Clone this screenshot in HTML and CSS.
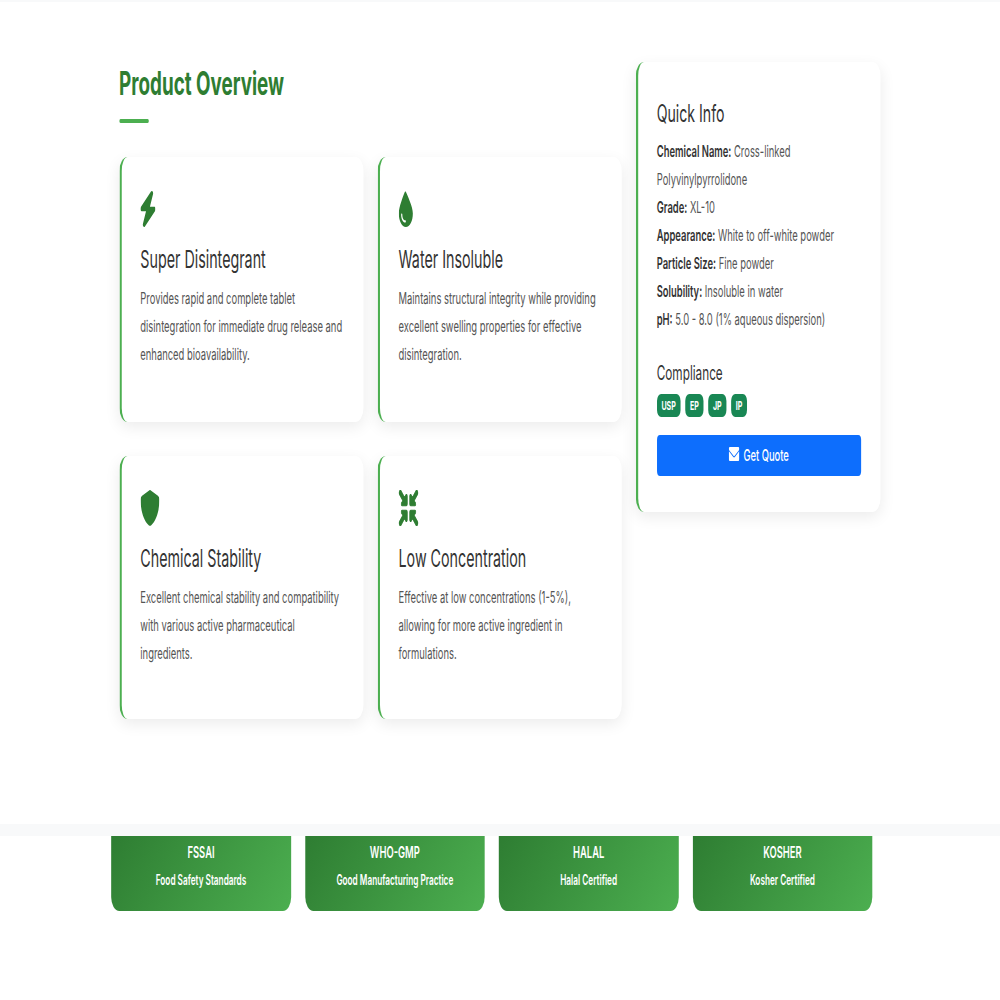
FILE: index.html
```html
<!DOCTYPE html>
<html lang="en">
<head>
<meta charset="utf-8">
<title>Product Overview</title>
<link rel="stylesheet" href="styles.css">
</head>
<body>
<div class="viewport">
<div class="page">
  <div class="top-strip"></div>
  <section class="overview">
    <div class="layout">
      <div class="main">
        <h2 class="title">Product Overview</h2>
        <div class="title-bar"></div>
        <div class="features">
          <article class="card feature">
            <svg class="icon bolt" viewBox="40 0 366 512" preserveAspectRatio="none"><path d="M349.4 44.6c5.9-13.7 1.5-29.7-10.6-38.5s-28.6-8-39.9 1.8l-256 224c-10 8.8-13.6 22.9-8.9 35.3S50.7 288 64 288H175.5L98.6 467.4c-5.9 13.7-1.5 29.7 10.6 38.5s28.6 8 39.9-1.8l256-224c10-8.8 13.6-22.9 8.9-35.3s-18.2-20.6-31.5-20.6H272.5L349.4 44.6z"/></svg>
            <h3>Super Disintegrant</h3>
            <p>Provides rapid and complete tablet disintegration for immediate drug release and enhanced bioavailability.</p>
          </article>
          <article class="card feature">
            <svg class="icon drop" viewBox="0 0 384 512" preserveAspectRatio="none"><path d="M192 512C86 512 0 426 0 320C0 228.8 130.2 57.7 166.6 11.7c6.4-8 18.5-8 24.9 0C227.8 57.7 384 228.8 384 320c0 106-86 192-192 192zM96 336c0-8.8-7.2-16-16-16s-16 7.2-16 16c0 61.9 50.1 112 112 112c8.8 0 16-7.2 16-16s-7.2-16-16-16c-44.2 0-80-35.8-80-80z"/></svg>
            <h3>Water Insoluble</h3>
            <p>Maintains structural integrity while providing excellent swelling properties for effective disintegration.</p>
          </article>
          <article class="card feature">
            <svg class="icon shield" viewBox="16 0 480 512" preserveAspectRatio="none"><path d="M256 0c4.6 0 9.2 1 13.4 2.9L457.7 82.8c22 9.3 38.4 31 38.3 57.2c-.5 99.2-41.3 280.7-213.6 363.2c-16.7 8-36.1 8-52.8 0C57.3 420.7 16.5 239.2 16 140c-.1-26.2 16.3-47.9 38.3-57.2L242.7 2.9C246.8 1 251.4 0 256 0z"/></svg>
            <h3>Chemical Stability</h3>
            <p>Excellent chemical stability and compatibility with various active pharmaceutical ingredients.</p>
          </article>
          <article class="card feature">
            <svg class="icon compress" viewBox="0 0 512 512" preserveAspectRatio="none"><path d="M200 288H88c-21.4 0-32.1 25.8-17 41l32.9 31-99.2 99.3c-6.2 6.2-6.2 16.4 0 22.6l25.4 25.4c6.2 6.2 16.4 6.2 22.6 0L152 408l31.1 33c15.1 15.1 40.9 4.4 40.9-17V312c0-13.3-10.7-24-24-24zm112-64h112c21.4 0 32.1-25.9 17-41l-33-31 99.3-99.3c6.2-6.2 6.2-16.4 0-22.6L481.9 4.7c-6.2-6.2-16.4-6.2-22.6 0L360 104l-31.1-33C313.8 55.9 288 66.6 288 88v112c0 13.3 10.7 24 24 24zm96 136l33-31.1c15.1-15.1 4.4-40.9-17-40.9H312c-13.3 0-24 10.7-24 24v112c0 21.4 25.9 32.1 41 17l31-32.9 99.3 99.3c6.2 6.2 16.4 6.2 22.6 0l25.4-25.4c6.2-6.2 6.2-16.4 0-22.6L408 360zM183 71.1L152 104 52.7 4.7c-6.2-6.2-16.4-6.2-22.6 0L4.7 30.1c-6.2 6.2-6.2 16.4 0 22.6L104 152l-33 31.1C55.9 198.2 66.6 224 88 224h112c13.3 0 24-10.7 24-24V88c0-21.3-25.9-32-41-16.9z"/></svg>
            <h3>Low Concentration</h3>
            <p>Effective at low concentrations (1-5%), allowing for more active ingredient in formulations.</p>
          </article>
        </div>
      </div>
      <aside class="card sidebar">
        <h4>Quick Info</h4>
        <ul class="facts">
          <li><strong>Chemical Name:</strong> Cross-linked Polyvinylpyrrolidone</li>
          <li><strong>Grade:</strong> XL-10</li>
          <li><strong>Appearance:</strong> White to off-white powder</li>
          <li><strong>Particle Size:</strong> Fine powder</li>
          <li><strong>Solubility:</strong> Insoluble in water</li>
          <li><strong>pH:</strong> 5.0 - 8.0 (1% aqueous dispersion)</li>
        </ul>
        <h4 class="compliance">Compliance</h4>
        <div class="badges">
          <span class="badge">USP</span><span class="badge">EP</span><span class="badge">JP</span><span class="badge">IP</span>
        </div>
        <a class="quote" href="#">
          <svg class="env" viewBox="0 64 512 384" preserveAspectRatio="none"><path d="M48 64C21.5 64 0 85.5 0 112c0 15.1 7.1 29.3 19.2 38.4L236.8 313.6c11.4 8.5 27 8.5 38.4 0L492.8 150.4c12.1-9.1 19.2-23.3 19.2-38.4c0-26.5-21.5-48-48-48H48zM0 176V384c0 35.3 28.7 64 64 64H448c35.3 0 64-28.7 64-64V176L294.4 339.2c-22.8 17.1-54 17.1-76.8 0L0 176z"/></svg>
          Get Quote
        </a>
      </aside>
    </div>
  </section>
  <div class="band"></div>
  <div class="certs">
    <div class="cert"><h5>FSSAI</h5><p>Food Safety Standards</p></div>
    <div class="cert"><h5>WHO-GMP</h5><p>Good Manufacturing Practice</p></div>
    <div class="cert"><h5>HALAL</h5><p>Halal Certified</p></div>
    <div class="cert"><h5>KOSHER</h5><p>Kosher Certified</p></div>
  </div>
</div>
</div>
</body>
</html>
```
FILE: styles.css
```css
* { box-sizing: border-box; }
html, body { margin: 0; padding: 0; background: #fff; }
body { font-family: Inter, "Liberation Sans", sans-serif; color: #333; }

.viewport { width: 1000px; height: 1000px; overflow: hidden; }
.page {
  width: 1700px;
  height: 1000px;
  transform: scaleX(0.5882);
  transform-origin: 0 0;
}
.top-strip { height: 2px; background: #f8f9fa; }

.overview { height: 822px; padding-top: 60px; }
.layout {
  width: 1294px;
  margin-left: 202.5px;
  display: grid;
  grid-template-columns: 854px 416px;
  gap: 24px;
  align-items: start;
}

.title { margin: 0; padding-top: 2px; font-size: 32px; line-height: 40px; font-weight: 700; color: #2e7d32; }
.title-bar { width: 50px; height: 4px; margin-top: 15px; border-radius: 2px; background: #4caf50; }

.features {
  display: grid;
  grid-template-columns: 415px 415px;
  grid-template-rows: 265px 263px;
  column-gap: 24px;
  row-gap: 34px;
  margin-top: 34px;
}

.card {
  background: #fff;
  border-left: 4px solid #4caf50;
  border-radius: 14px;
  box-shadow: 0 5px 20px rgba(0, 0, 0, 0.08);
}
.feature { padding: 34px 32px 0 32px; }
.feature h3 { margin: 18px 0 0; font-size: 24.3px; line-height: 29px; font-weight: 400; color: #333; }
.feature p { margin: 10px 0 0; font-size: 16px; line-height: 28px; color: #555; }

.icon { display: block; height: 36px; fill: #2e7d32; }
.bolt { width: 25px; }
.drop { width: 24px; }
.shield { width: 32px; }
.compress { width: 33px; stroke: #2e7d32; stroke-width: 16; }

.sidebar { padding: 37px 33px 36px 32px; }
.sidebar h4 { margin: 0; font-size: 24px; line-height: 30px; font-weight: 400; color: #333; }
.facts { list-style: none; margin: 8px 0 0; padding: 0; font-size: 16px; line-height: 28px; color: #555; }
.facts strong { font-weight: 600; color: #333; }
.sidebar .compliance { margin-top: 25px; font-size: 20px; }
.badges { display: flex; gap: 8px; margin-top: 6px; }
.badge {
  height: 23px;
  padding: 0 8px;
  border-radius: 7px;
  background: #198754;
  color: #fff;
  font-size: 12px;
  line-height: 23px;
  font-weight: 700;
}
.quote {
  display: flex;
  align-items: center;
  justify-content: center;
  gap: 7px;
  height: 41px;
  margin-top: 18px;
  padding-bottom: 2px;
  border-radius: 5px;
  background: #0d6efd;
  color: #fff;
  font-size: 16px;
  font-weight: 500;
  text-decoration: none;
}
.env { width: 18px; height: 14px; fill: #fff; margin-top: -1px; }

.band { height: 12px; background: #f8f9fa; }

.certs {
  display: grid;
  grid-template-columns: repeat(4, 305.5px);
  gap: 24px;
  margin-left: 189px;
}
.cert {
  height: 75px;
  padding-top: 5px;
  border-radius: 0 0 14px 14px;
  background: linear-gradient(135deg, #2e7d32, #4caf50);
  color: #fff;
  text-align: center;
}
.cert h5 { margin: 0; font-size: 16px; line-height: 22px; font-weight: 600; }
.cert p { margin: 7px 0 0; font-size: 14px; line-height: 20px; font-weight: 600; }
```
